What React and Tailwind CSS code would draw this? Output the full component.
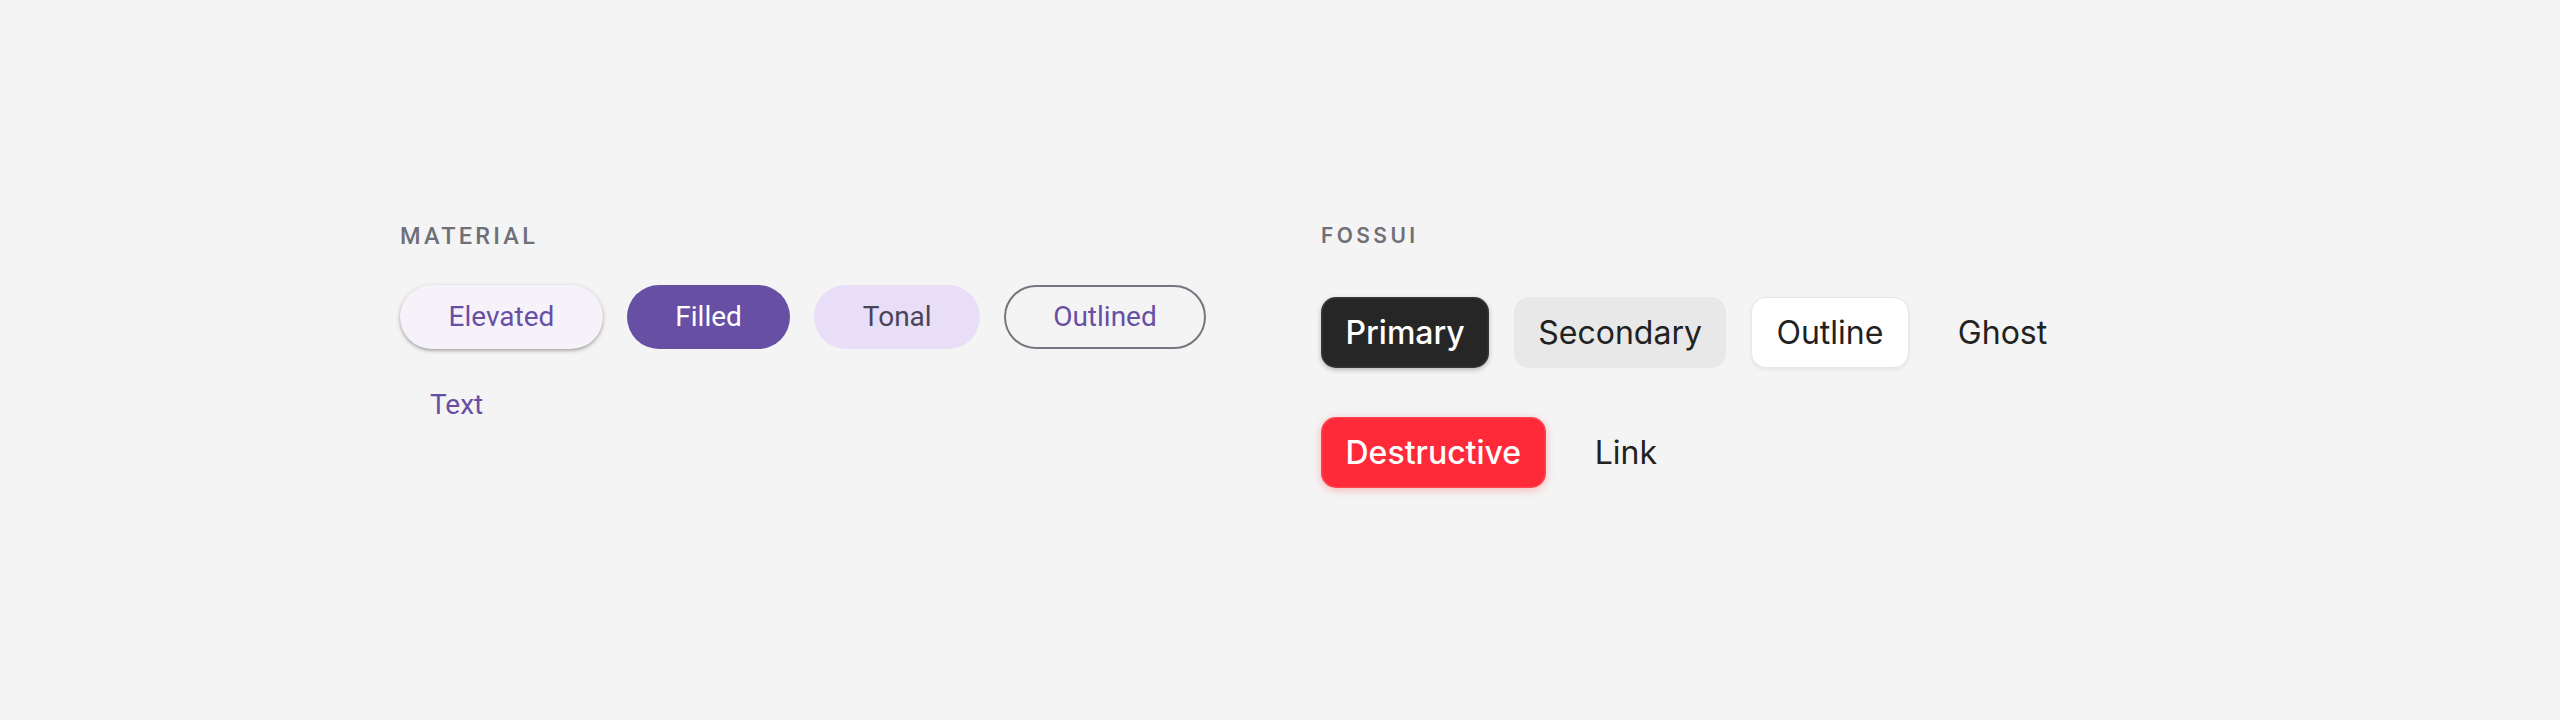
import React from "react";

const roboto = { fontFamily: "Roboto, 'Liberation Sans', sans-serif" };
const inter = { fontFamily: "Inter, 'Liberation Sans', sans-serif" };

function MaterialButton({ variant, children }) {
  const base =
    "h-[64px] rounded-full flex items-center justify-center text-[28px] leading-none whitespace-nowrap";
  const styles = {
    elevated:
      "px-[48.5px] bg-[#f7f2fa] text-[#6750a4] shadow-[0_1.6px_3px_rgba(0,0,0,0.25),0_1.6px_5px_1px_rgba(0,0,0,0.1)]",
    filled: "px-[48.5px] bg-[#6750a4] text-white",
    tonal: "px-[48.5px] bg-[#e8def8] text-[#4a4458]",
    outlined: "px-[47px] border-2 border-[#79747e] text-[#6750a4]",
    text: "px-[30px] text-[#6750a4]",
  };
  return (
    <button className={`${base} ${styles[variant]}`} style={roboto}>
      {children}
    </button>
  );
}

function FossButton({ variant, children }) {
  const base =
    "h-[71px] rounded-[15px] flex items-center justify-center px-[24.5px] text-[32px] leading-none whitespace-nowrap";
  const styles = {
    primary:
      "font-medium bg-[#262626] text-white shadow-[0_2px_5px_rgba(0,0,0,0.25),inset_0_0_0_1.5px_rgba(255,255,255,0.08)]",
    secondary: "font-normal bg-[#e8e8e8] text-[#222222]",
    outline:
      "font-normal bg-white text-[#222222] border-[1.6px] border-[#e6e6e6] shadow-[0_2px_4px_rgba(0,0,0,0.06)]",
    ghost: "font-normal text-[#222222]",
    destructive:
      "font-medium bg-[#fe2a39] text-white shadow-[0_2px_8px_rgba(254,42,57,0.3),inset_0_0_0_1.5px_rgba(255,255,255,0.12)]",
    link: "font-normal text-[#222222]",
  };
  return (
    <button className={`${base} ${styles[variant]}`} style={inter}>
      {children}
    </button>
  );
}

export default function App() {
  return (
    <div className="min-h-screen bg-[#f4f4f4]">
      <div className="w-[1760px] mx-auto pt-[225px] grid grid-cols-2 gap-x-[82px]">
        <section>
          <h2
            className="text-[23.5px] leading-[23px] font-medium tracking-[3.2px] text-[#6f6f78]"
            style={roboto}
          >
            MATERIAL
          </h2>
          <div className="mt-[37px] flex flex-wrap gap-[24px]">
            <MaterialButton variant="elevated">Elevated</MaterialButton>
            <MaterialButton variant="filled">Filled</MaterialButton>
            <MaterialButton variant="tonal">Tonal</MaterialButton>
            <MaterialButton variant="outlined">Outlined</MaterialButton>
            <MaterialButton variant="text">Text</MaterialButton>
          </div>
        </section>
        <section>
          <h2
            className="text-[21px] leading-[21px] font-semibold tracking-[3.4px] text-[#6f6f78]"
            style={inter}
          >
            FOSSUI
          </h2>
          <div className="mt-[51px] flex flex-wrap gap-x-[24.5px] gap-y-[49px]">
            <FossButton variant="primary">Primary</FossButton>
            <FossButton variant="secondary">Secondary</FossButton>
            <FossButton variant="outline">Outline</FossButton>
            <FossButton variant="ghost">Ghost</FossButton>
            <FossButton variant="destructive">Destructive</FossButton>
            <FossButton variant="link">Link</FossButton>
          </div>
        </section>
      </div>
    </div>
  );
}
